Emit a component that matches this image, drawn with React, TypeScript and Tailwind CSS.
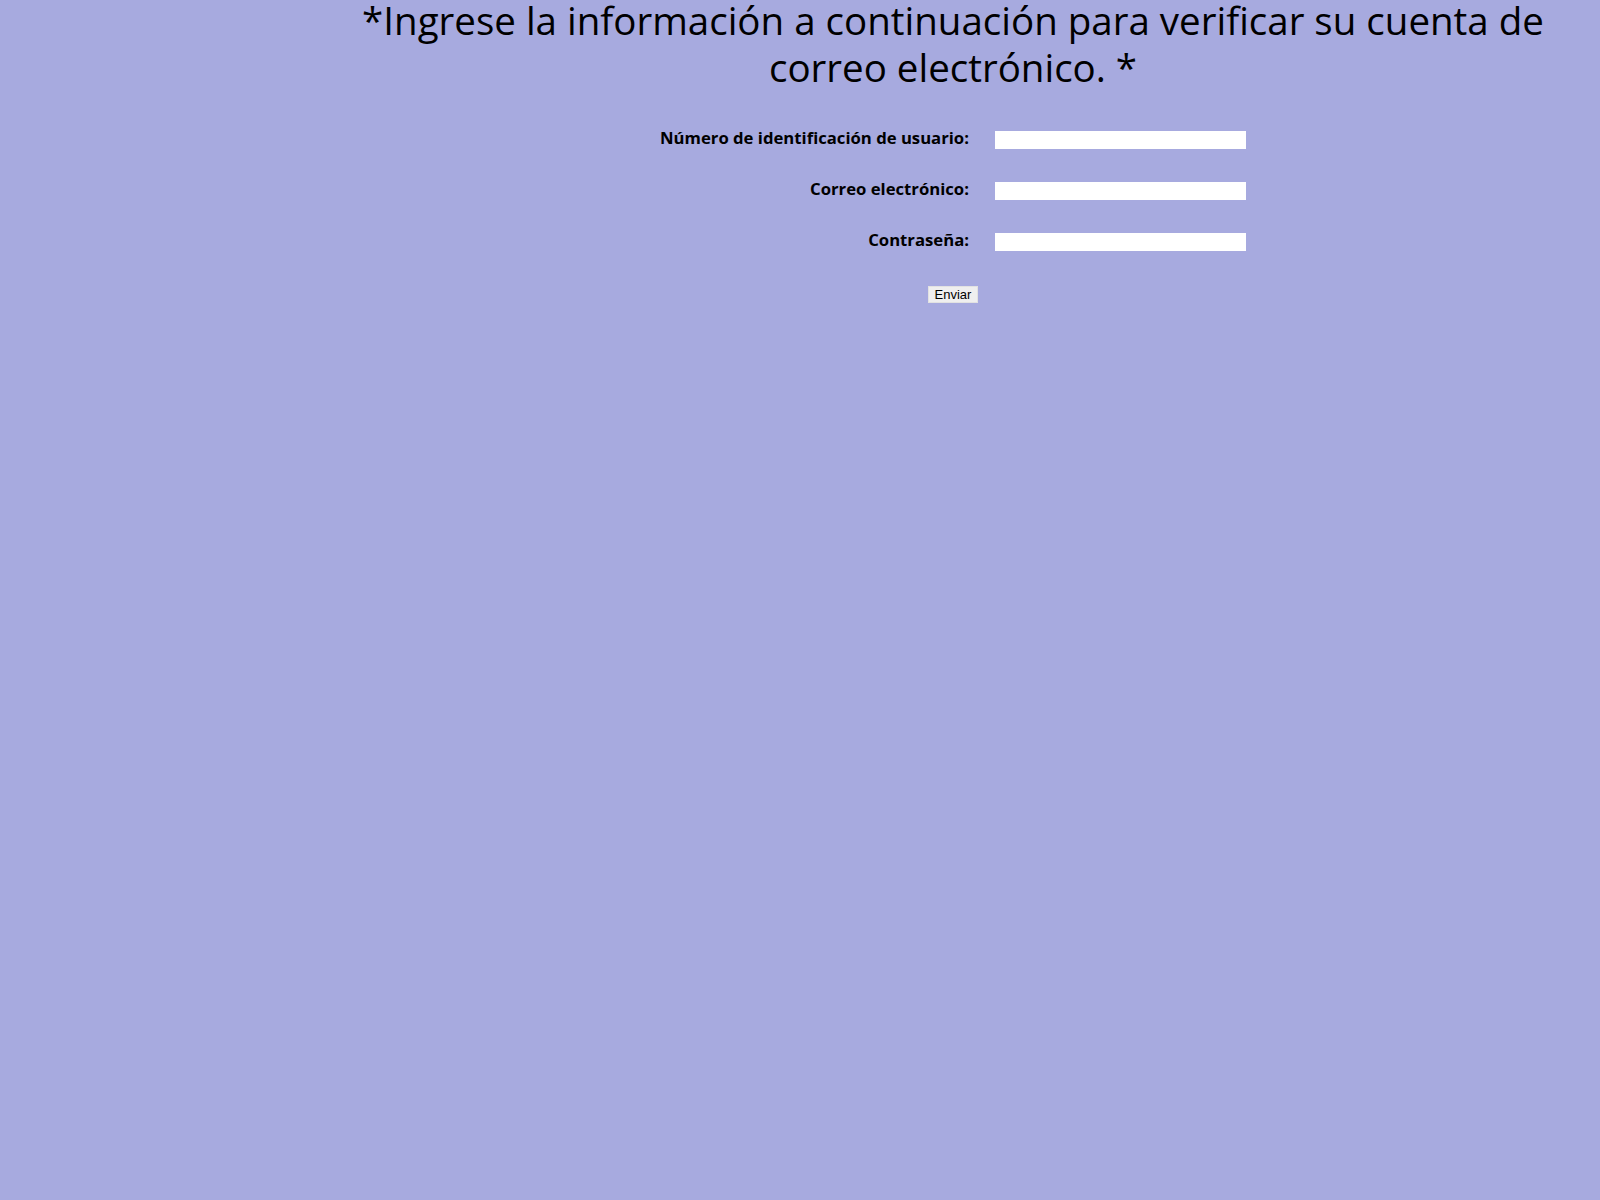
import React from "react";

const fields = [
  { label: "Número de identificación de usuario:", type: "text" },
  { label: "Correo electrónico:", type: "email" },
  { label: "Contraseña:", type: "password" },
];

export default function App() {
  return (
    <div className="flow-root min-h-screen w-full bg-[#a7aadf] text-black">
      <div className="ml-[306px] text-center">
        <h1 className="-mt-[3px] text-[38.5px] font-normal leading-[47px] font-['Open_Sans',sans-serif]">
          *Ingrese la información a continuación para verificar su cuenta de correo electrónico. *
        </h1>

        <form className="mt-[21px] inline-grid grid-cols-[auto_251px] gap-x-[26px]">
          {fields.map((f) => (
            <React.Fragment key={f.label}>
              <label className="flex h-[51px] items-center justify-end text-[16.7px] font-bold font-['Open_Sans',sans-serif]">
                {f.label}
              </label>
              <div className="flex h-[51px] items-center pt-[5px]">
                <input type={f.type} className="h-[18px] w-[251px] border-0 bg-white px-1 text-[13px] outline-none" />
              </div>
            </React.Fragment>
          ))}
          <div className="col-span-2 flex justify-center pt-[21px]">
            <button
              type="submit"
              className="h-[17px] w-[50px] border border-[#e2e2e2] bg-[#efefef] text-[13px] leading-[15px] font-['Liberation_Sans',sans-serif]"
            >
              Enviar
            </button>
          </div>
        </form>
      </div>
    </div>
  );
}
